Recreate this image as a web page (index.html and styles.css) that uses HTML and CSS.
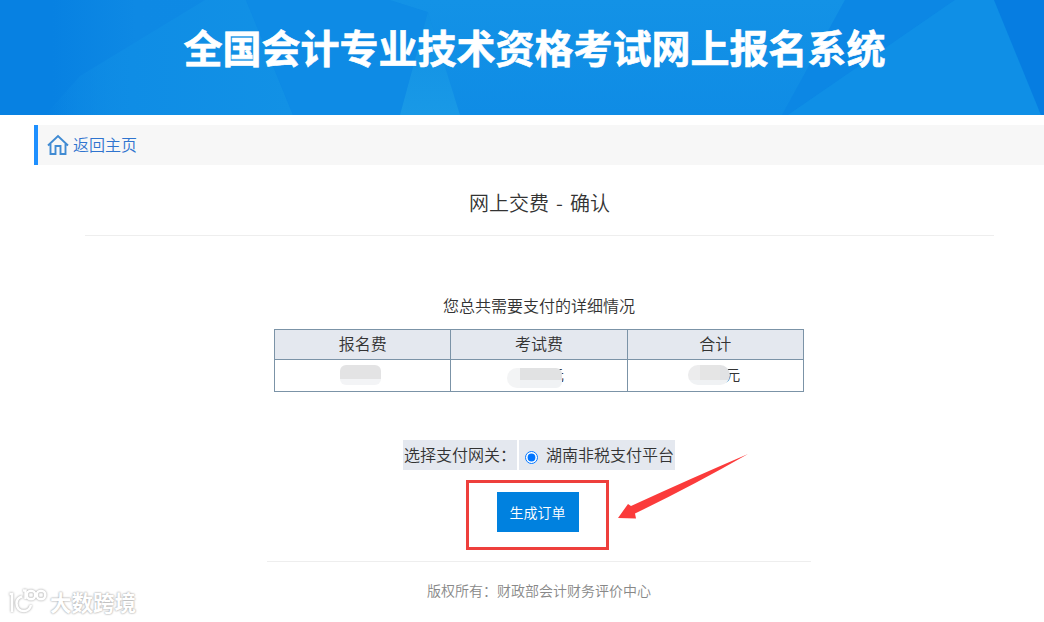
FILE: index.html
```
<!DOCTYPE html>
<html lang="zh-CN">
<head>
  <meta charset="UTF-8">
  <title>网上交费 - 确认</title>
  <link rel="stylesheet" href="styles.css">
</head>
<body>
  <header class="banner">
    <svg class="banner-bg" viewBox="0 0 1044 115" preserveAspectRatio="none">
      <defs>
        <linearGradient id="base" x1="0" x2="1" y1="0" y2="0">
          <stop offset="0" stop-color="#0781e2"/>
          <stop offset="0.05" stop-color="#0781e2"/>
          <stop offset="0.13" stop-color="#0e89e4"/>
          <stop offset="1" stop-color="#0f8ee6"/>
        </linearGradient>
        <linearGradient id="facet" x1="0" x2="1" y1="0" y2="0">
          <stop offset="0" stop-color="#0f8de5" stop-opacity="0"/>
          <stop offset="0.35" stop-color="#0f8de5"/>
          <stop offset="1" stop-color="#1291e5"/>
        </linearGradient>
        <linearGradient id="shine" x1="0" x2="0" y1="0" y2="1">
          <stop offset="0" stop-color="#1190e5"/>
          <stop offset="1" stop-color="#1999e6"/>
        </linearGradient>
        <linearGradient id="middle" x1="0" x2="0" y1="0" y2="1">
          <stop offset="0" stop-color="#1392e6"/>
          <stop offset="1" stop-color="#0f8ce5"/>
        </linearGradient>
      </defs>
      <rect width="1044" height="115" fill="url(#base)"/>
      <polygon points="205,0 246,0 293,115 45,115 80,76" fill="url(#facet)"/>
      <polygon points="246,0 390,0 428,12 400,115 293,115" fill="#0e8be5"/>
      <polygon points="390,0 845,0 782,115 460,115 428,12" fill="url(#middle)"/>
      <polygon points="428,12 460,115 400,115" fill="url(#shine)"/>
      <polygon points="845,0 955,0 788,115 782,115" fill="#0c87e4"/>
      <polygon points="955,0 994,0 1041,115 788,115" fill="#0f8fe6"/>
      <polygon points="994,0 1044,0 1044,115 1041,115" fill="#067de1"/>
    </svg>
    <h1>全国会计专业技术资格考试网上报名系统</h1>
  </header>

  <div class="page">
    <nav class="crumb">
      <a href="#">
        <svg class="home" width="22" height="22" viewBox="0 0 22 22">
          <path d="M1 11.5 11 2 21 11.5M3.5 10V20H8.5V12H13.5V20H18.5V10"/>
        </svg>
        <span>返回主页</span>
      </a>
    </nav>

    <h2>网上交费 - 确认</h2>

    <main>
      <p class="caption">您总共需要支付的详细情况</p>
      <table class="fees">
        <tr><th>报名费</th><th>考试费</th><th>合计</th></tr>
        <tr>
          <td><span class="amount first"></span></td>
          <td><span class="amount second">元</span></td>
          <td><span class="amount total">元</span></td>
        </tr>
      </table>

      <div class="gateway">
        <span class="gateway-label">选择支付网关：</span>
        <label class="gateway-option"><input type="radio" name="gateway" checked>湖南非税支付平台</label>
      </div>

      <div class="submit-box">
        <button type="button">生成订单</button>
        <svg class="arrow" width="132" height="66" viewBox="0 0 132 66">
          <path d="M131 0 Q75 24 14 52 L11 50 L1 64 L19 64.500 L18 59.500 Q75 32 131 0Z"/>
        </svg>
      </div>
    </main>

    <footer>版权所有：财政部会计财务评价中心</footer>
  </div>

  <div class="watermark">
    <svg width="40" height="28" viewBox="0 0 40 28">
      <path d="M1.500 7H4V25M14 9.500Q8.500 11 8.500 16.500Q9 24 16 24Q21.500 24 23 18M15 3.500H17.500V12"/>
      <circle cx="23" cy="8" r="4.300"/>
      <circle cx="33" cy="8" r="4.300"/>
    </svg>
    <span>大数跨境</span>
  </div>
</body>
</html>
```

FILE: styles.css
```
* {
  box-sizing: border-box;
}
body {
  margin: 0;
  height: 622px;
  overflow: hidden;
  background: #fff;
  color: #333;
  font-family: "Noto Sans CJK SC", sans-serif;
  font-size: 16px;
  font-weight: 350;
}
.banner {
  position: relative;
  height: 115px;
}
.banner-bg {
  position: absolute;
  width: 100%;
  height: 100%;
}
.banner h1 {
  position: relative;
  margin: 0;
  padding: 17px 0 0 25px;
  color: #fff;
  font-size: 39px;
  font-weight: 700;
  line-height: 58px;
  text-align: center;
  -webkit-text-stroke: 0.6px #fff;
}
.page {
  margin: 10px 0 0 34px;
}
.crumb {
  height: 40px;
  padding-left: 9px;
  border-left: 4px solid #1e90ff;
  background: #f7f7f7;
}
.crumb a {
  display: flex;
  align-items: center;
  gap: 4px;
  height: 40px;
  color: #2f74cf;
  text-decoration: none;
}
.crumb span {
  padding-bottom: 2px;
}
.home {
  fill: none;
  stroke: #408bd3;
  stroke-width: 1.9;
}
h2 {
  height: 71px;
  margin: 0 50px 0 51px;
  padding-top: 18px;
  border-bottom: 1px solid #eee;
  font-size: 20px;
  font-weight: 350;
  line-height: 40px;
  text-align: center;
  word-spacing: 2.5px;
}
main {
  display: flex;
  flex-direction: column;
  align-items: center;
}
.caption {
  margin: 57px 0 12px;
  line-height: 24px;
}
.fees {
  width: 530px;
  border-collapse: collapse;
  table-layout: fixed;
}
.fees th,
.fees td {
  height: 30px;
  padding: 0 0 3px;
  border: 1px solid #7b93a7;
  font-weight: 350;
  line-height: 24px;
  text-align: center;
}
.fees th {
  background: #e4e8ef;
}
.fees td {
  height: 32px;
}
.amount {
  position: relative;
  display: block;
  width: 50px;
  height: 24px;
  margin: 0 auto;
  text-align: right;
}
/* hides the digits */
.amount::before {
  content: "";
  position: absolute;
  left: 2px;
  top: 3px;
  width: 41px;
  height: 20px;
  border-radius: 6px;
  background: linear-gradient(#e3e3e4 70%, #f3f4f6 70%);
}
.second::before {
  left: -7px;
  top: 6px;
  width: 55px;
  border-radius: 10px 6px 6px 10px;
  background: linear-gradient(90deg, #f3f4f5 13px, transparent 13px), linear-gradient(#e1e2e3 60%, #f0f2f4 60%);
}
.total::before {
  left: -2px;
  width: 42px;
  border-radius: 10px;
  background: linear-gradient(transparent 75%, #f0f2f4 75%), linear-gradient(90deg, #ececed 12px, #e5e5e5 12px, #e5e5e5 32px, #e1e2e4 32px);
}
.gateway {
  display: flex;
  gap: 2px;
  margin-top: 48px;
  line-height: 28px;
}
.gateway-label,
.gateway-option {
  height: 30px;
  padding: 0 1px 2px;
  background: #e4e8ef;
}
.gateway-option {
  display: flex;
  align-items: center;
}
.gateway-option input {
  width: 13px;
  height: 13px;
  margin: 6px 8px 0 5px;
}
.submit-box {
  position: relative;
  width: 143px;
  height: 70px;
  margin: 10px 4px 0 0;
  padding: 9px 28px;
  border: 3px solid #ee3f3c;
}
.submit-box button {
  width: 82px;
  height: 40px;
  padding: 0;
  border: 0;
  background: #0081df;
  color: #fff;
  font: 350 14px "Noto Sans CJK SC", sans-serif;
}
.arrow {
  position: absolute;
  left: 148px;
  top: -29px;
  fill: #fb3b3b;
}
footer {
  width: 544px;
  margin: 11px auto 0;
  padding-top: 18px;
  border-top: 1px solid #eee;
  color: #888;
  font-size: 14px;
  line-height: 20px;
  text-align: center;
}
.watermark {
  position: absolute;
  left: 8px;
  top: 587px;
  display: flex;
  gap: 2px;
  color: #fff;
  font-size: 21.5px;
  font-weight: 700;
  line-height: 30px;
  text-shadow: 0 0 2px #aaa, 0 0 2px #bbb;
}
.watermark svg {
  fill: none;
  stroke: #fff;
  stroke-width: 2.5;
  filter: drop-shadow(0 0 1px #999);
}
```
